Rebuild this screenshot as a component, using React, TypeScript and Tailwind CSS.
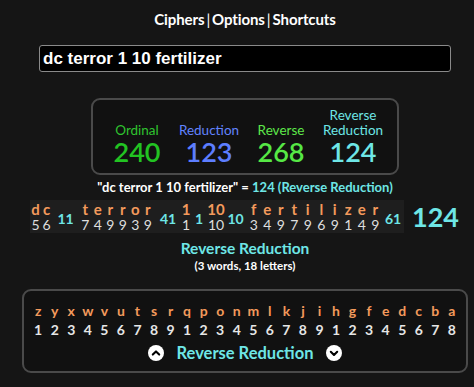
type Word = { text: string; vals: number[]; total: number; cell: string; totalW: string; num?: boolean };

const words: Word[] = [
  { text: 'dc', vals: [5, 6], total: 11, cell: 'w-[11px]', totalW: 'w-[27px]' },
  { text: 'terror', vals: [7, 4, 9, 9, 3, 9], total: 41, cell: 'w-[12.5px]', totalW: 'w-[28px]' },
  { text: '1', vals: [1], total: 1, cell: 'w-[8px]', totalW: 'w-[18px]', num: true },
  { text: '10', vals: [10], total: 10, cell: 'w-[16px]', totalW: 'w-[23px]', num: true },
  { text: 'fertilizer', vals: [3, 4, 9, 7, 9, 6, 9, 1, 4, 9], total: 61, cell: 'w-[13.5px]', totalW: 'w-[22px]' },
];

const alphabet = 'zyxwvutsrqponmlkjihgfedcba'.split('');

const scores = [
  { label: ['Ordinal'], value: 240, labelColor: 'text-[#2fc42f]', valueColor: 'text-[#22c322]' },
  { label: ['Reduction'], value: 123, labelColor: 'text-[#6283ff]', valueColor: 'text-[#5d7eff]' },
  { label: ['Reverse'], value: 268, labelColor: 'text-[#5ee84a]', valueColor: 'text-[#56e845]' },
  { label: ['Reverse', 'Reduction'], value: 124, labelColor: 'text-[#6ee6e6]', valueColor: 'text-[#6ee6e6]' },
];

function CircleChevron({ up }: { up?: boolean }) {
  return (
    <svg width="16" height="16" viewBox="0 0 20 20">
      <circle cx="10" cy="10" r="10" fill="#fff" />
      <path
        d={up ? 'M6 12l4-4 4 4' : 'M6 8.5l4 4 4-4'}
        fill="none"
        stroke="#000"
        strokeWidth="2.6"
        strokeLinecap="round"
        strokeLinejoin="round"
      />
    </svg>
  );
}

export default function App() {
  return (
    <div className="w-[474px] h-[387px] overflow-hidden bg-[#151515] font-['Lato',sans-serif] text-white flex flex-col items-center pl-[16px]">
      {/* Nav */}
      <div className="mt-[10px] h-[18px] text-[15px] font-bold leading-[18px] tracking-[-0.1px]">
        Ciphers<span className="font-normal mx-[2px]">|</span>Options<span className="font-normal mx-[2px]">|</span>Shortcuts
      </div>

      {/* Input */}
      <div className="mt-[17px] w-[412px] h-[27px] bg-black border border-[#8a8a8a] rounded-[3px] flex items-center px-[3px]">
        <span className="font-['Liberation_Sans',Arial,sans-serif] font-bold text-[17px] leading-none">
          dc terror 1 10 fertilizer
        </span>
      </div>

      {/* Score box */}
      <div className="mt-[26px] w-[308px] h-[77px] rounded-[9px] border-2 border-[#4a4a4a] bg-[#111] flex justify-center items-end pb-[8px]">
        {scores.map((s) => (
          <div key={s.value} className="w-[72px] flex flex-col items-center">
            {s.label.map((l) => (
              <div key={l} className={`text-[13.5px] leading-[15px] ${s.labelColor}`}>
                {l}
              </div>
            ))}
            <div className={`text-[27px] leading-[26px] mt-[1px] font-semibold ${s.valueColor}`}>{s.value}</div>
          </div>
        ))}
      </div>

      {/* Summary */}
      <div className="mt-[4px] text-[13px] font-bold leading-[16px]">
        "dc terror 1 10 fertilizer" = <span className="text-[#6ee6e6]">124 (Reverse Reduction)</span>
      </div>

      {/* Breakdown */}
      <div className="mt-[5px] self-start ml-[14px] flex items-center">
        <div className="flex items-center bg-[#1e1e1e] h-[33px]">
          {words.map((w, wi) => (
            <div key={wi} className="flex items-center">
              {(w.num ? [w.text] : w.text.split('')).map((c, ci) => (
                <div key={ci} className={`flex flex-col items-center ${w.cell}`}>
                  <span className="text-[15px] font-bold leading-[16px] text-[#f39a5c]">{c}</span>
                  <span className="text-[14px] leading-[16px] text-[#dedede]">{w.vals[ci]}</span>
                </div>
              ))}
              <div className={`${w.totalW} text-center pt-[5px] text-[14px] font-bold text-[#6ee6e6] leading-none`}>
                {w.total}
              </div>
            </div>
          ))}
        </div>
        <div className="ml-[8px] text-[27px] font-bold leading-none text-[#6ee6e6]">124</div>
      </div>

      <div className="mt-[5px] text-[15.5px] font-bold leading-[20px] text-[#6ee6e6]">Reverse Reduction</div>
      <div className="mt-[1px] text-[11.5px] font-bold leading-[14px]">(3 words, 18 letters)</div>

      {/* Cipher chart */}
      <div className="mt-[16px] w-[446px] h-[84px] rounded-[9px] border-2 border-[#4a4a4a] bg-[#111] flex flex-col items-center pt-[11px]">
        <div className="flex">
          {alphabet.map((c, i) => (
            <div key={i} className="w-[16.55px] flex flex-col items-center">
              <span className="text-[14px] font-bold leading-[18px] text-[#f39a5c]">{c}</span>
              <span className="text-[14px] font-bold leading-[19px] text-[#e6e6e6]">{(i % 9) + 1}</span>
            </div>
          ))}
        </div>
        <div className="mt-[4px] flex items-center">
          <CircleChevron up />
          <span className="mx-[12px] text-[16.5px] font-bold leading-[20px] text-[#6ee6e6]">Reverse Reduction</span>
          <CircleChevron />
        </div>
      </div>
    </div>
  );
}
